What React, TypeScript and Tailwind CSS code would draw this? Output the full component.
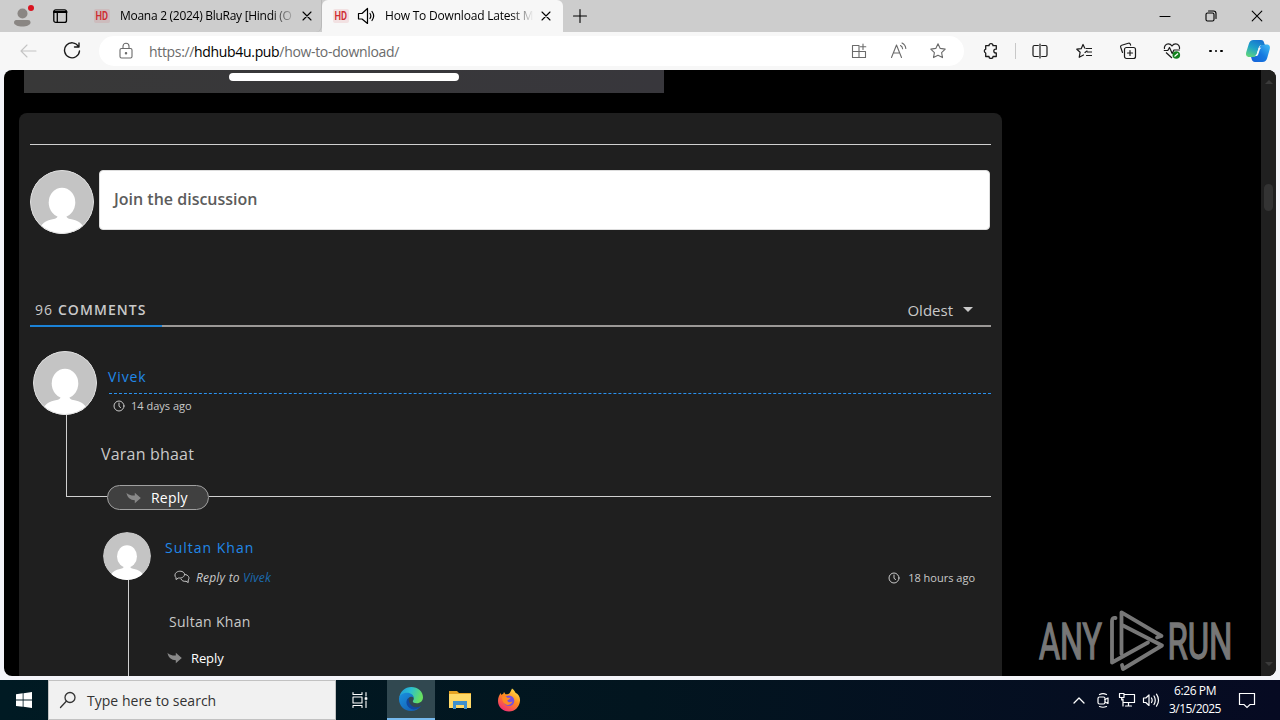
import type { ReactNode } from "react";

type IconProps = {
  className?: string;
  size?: number;
  width?: number;
  children: ReactNode;
};

function Icon({ className = "", size = 16, width = 1.1, children }: IconProps) {
  return (
    <svg
      aria-hidden="true"
      width={size}
      height={size}
      viewBox={`0 0 ${size} ${size}`}
      fill="none"
      stroke="currentColor"
      strokeWidth={width}
      strokeLinecap="round"
      strokeLinejoin="round"
      className={`shrink-0 ${className}`}
    >
      {children}
    </svg>
  );
}

function CloseIcon({ className = "" }: { className?: string }) {
  return (
    <Icon size={10} className={className}>
      <path d="M1 1l8 8M9 1L1 9" />
    </Icon>
  );
}

function Avatar({ size, ring = false }: { size: number; ring?: boolean }) {
  return (
    <svg
      aria-hidden="true"
      width={size}
      height={size}
      viewBox="0 0 64 64"
      className="block shrink-0 overflow-hidden rounded-full"
    >
      <circle cx="32" cy="32" r="32" fill="#c4c4c4" />
      <ellipse cx="32" cy="32.500" rx="13.300" ry="14.700" fill="#fff" />
      <path
        d="M27.500 44c.5 4-1 4.500-5 5.300C17 50.300 13 52.500 10.500 57v7h43v-7c-2.500-4.500-6.500-6.700-12-7.700-4-.8-5.500-1.300-5-5.300z"
        fill="#fff"
      />
      {ring && (
        <circle cx="32" cy="32" r="31.500" fill="none" stroke="#ddd" />
      )}
    </svg>
  );
}

function ClockIcon() {
  return (
    <Icon size={12} width={1}>
      <circle cx="6" cy="6" r="5" />
      <path d="M6 3v3.300l1.600 1.200" />
    </Icon>
  );
}

function ReplyArrow({ className = "" }: { className?: string }) {
  return (
    <svg
      aria-hidden="true"
      width="16"
      height="12"
      viewBox="0 0 16 12"
      fill="currentColor"
      className={`shrink-0 ${className}`}
    >
      <path d="M.5.800C2 2.800 5 3.700 8.800 3.600V.8L14.800 6 8.800 11.300V8.300C4.500 8.300 1.200 5.500.5.800z" />
    </svg>
  );
}

function TitleBar() {
  return (
    <div className="flex h-8 bg-[#cdcdcd] text-[12px] text-black">
      <div className="flex w-20 items-center">
        <svg
          aria-hidden="true"
          width="24"
          height="24"
          viewBox="0 0 24 24"
          className="ml-3"
        >
          <circle cx="10.500" cy="9.500" r="5" fill="#8a8683" />
          <path
            d="M2 18.500c0-2 1.500-2.500 3-2.500h11c1.500 0 2.500.8 2.500 2.500 0 2.500-4 4-8.200 4S2 21 2 18.500z"
            fill="#8a8683"
          />
          <circle cx="19" cy="4" r="3" fill="#d9131f" />
        </svg>
        <Icon className="ml-4" width={1.3}>
          <rect x="1.800" y="1.800" width="12.700" height="12.600" rx="2" />
          <path d="M2 4h12.500" strokeWidth="2" />
          <path d="M5.300 4.500v9.500" />
        </Icon>
      </div>
      <div className="flex w-[242px] items-center rounded-b-md border-r border-[#b9b9b9] pl-[14px]">
        <Favicon />
        <span className="ml-[10px] w-[176px] whitespace-nowrap tracking-[-0.28px] [mask-image:linear-gradient(90deg,#000_86%,transparent)]">
          Moana 2 (2024) BluRay [Hindi (O
        </span>
        <CloseIcon className="ml-[6px]" />
      </div>
      <div className="flex w-[241px] items-center rounded-t-md bg-[#f7f7f7] pl-[11px]">
        <Favicon />
        <Icon size={18} width={1.2} className="ml-[8px]">
          <path d="M1.500 6.500h3.500l5.500-5v15l-5.500-4.500H1.500z" />
          <path d="M13 6.500c1 1.500 1 3.500 0 5M15 4.500c2 2.700 2 6.300 0 9" />
        </Icon>
        <span className="ml-[10px] w-[150px] whitespace-nowrap tracking-[-0.2px] [mask-image:linear-gradient(90deg,#000_84%,transparent_99%)]">
          How To Download Latest Mo
        </span>
        <CloseIcon className="ml-[6px]" />
      </div>
      <Icon className="ml-[9px] self-center" size={16}>
        <path d="M8 1.500v13M1.500 8h13" />
      </Icon>
      <div className="ml-auto flex items-center">
        <Icon size={12} className="mr-[34px]">
          <path d="M1 6.500h10" />
        </Icon>
        <Icon size={12} className="mr-[34px]">
          <rect x="1" y="3" width="8" height="8" rx="1.500" />
          <path d="M3.500 1h5c1.500 0 2.500 1 2.500 2.500v5" />
        </Icon>
        <Icon size={12} className="mr-[17px]">
          <path d="M1.200 1.200l9.600 9.600M10.800 1.200l-9.600 9.600" />
        </Icon>
      </div>
    </div>
  );
}

function Favicon() {
  return (
    <svg
      aria-hidden="true"
      width="16"
      height="16"
      viewBox="0 0 16 16"
      className="shrink-0 overflow-visible"
    >
      <rect y="1" width="16" height="14" rx="2" fill="#cf2b31" opacity=".1" />
      <text
        x="1.500"
        y="12.300"
        textLength="12.500"
        lengthAdjust="spacingAndGlyphs"
        fontFamily="Roboto, sans-serif"
        fontSize="12.500"
        fontWeight="600"
        fill="#cf2b31"
      >
        HD
      </text>
    </svg>
  );
}

function CopilotIcon() {
  return (
    <svg aria-hidden="true" width="26" height="24" viewBox="0 0 26 24">
      <defs>
        <linearGradient id="cop-a" x1=".7" y1="0" x2=".2" y2="1">
          <stop offset="0" stopColor="#1673d0" />
          <stop offset=".5" stopColor="#1fa3c8" />
          <stop offset="1" stopColor="#5fd57c" />
        </linearGradient>
        <linearGradient id="cop-b" x1="1" y1="0" x2="0" y2="1">
          <stop offset="0" stopColor="#41c0f5" />
          <stop offset=".5" stopColor="#1679e0" />
          <stop offset="1" stopColor="#1560d8" />
        </linearGradient>
      </defs>
      <path
        d="M18 5.500h3.500c3 0 4 2 3.200 4.800l-2.500 8.700c-.8 2.800-2.200 4-4.800 4H10c-2 0-3-1.500-3.500-3.500L5.800 17h4c1.700 0 2.600-1 3-2.500l2-6.500c.4-1.500 1.500-2.500 3.200-2.500z"
        fill="url(#cop-b)"
      />
      <path
        d="M8.500 1H16c2 0 2.700 1.300 3.200 3l.6 2h-3c-1.600 0-2.600 1-3 2.400l-2.200 7C11 17 10.200 18 8.300 18H4.500C1.300 18 .5 15.800 1.300 13l2.500-8C4.600 2.300 6 1 8.500 1z"
        fill="url(#cop-a)"
      />
      <path
        d="M13.700 8.800h2.700c-1 .6-1.500 1.500-1.900 2.700l-1.200 3.700c-.4 1-1 1.700-2 1.900H9.500c1.200-.2 1.900-1 2.200-2z"
        fill="#f4f8fb"
      />
    </svg>
  );
}

function Toolbar() {
  return (
    <div className="flex h-[38px] items-center bg-[#f7f7f7] text-[#1b1b1b]">
      <Icon size={18} className="ml-[19px] text-[#c4c4c4]">
        <path d="M17 9H2M8 3L2 9l6 6" />
      </Icon>
      <Icon size={18} width={1.4} className="ml-[26px]">
        <path d="M15.500 4.500A7.500 7.500 0 1 0 16.500 9M16 1v4h-4.500" />
      </Icon>
      <div className="ml-[18px] flex h-[30px] w-[865px] items-center rounded-full bg-white pl-[18px] text-[#6b6b6b]">
        <Icon size={18}>
          <rect x="3" y="6.500" width="12" height="9.500" rx="1.500" />
          <path d="M6 6.500V4.300a3 3 0 0 1 6 0v2.200" />
          <circle cx="9" cy="11.200" r=".7" fill="currentColor" />
        </Icon>
        <span className="ml-[14px] whitespace-nowrap text-[14px] tracking-[-0.33px]">
          https://<span className="text-black">hdhub4u.pub</span>
          /how-to-download/
        </span>
        <Icon className="mr-[23px] ml-auto">
          <path d="M1.500 2.500h6.500v12H1.500zM1.500 8.500h13v6H8M12 1v5.500M9.300 3.800h5.500" />
        </Icon>
        <Icon size={18} className="mr-[22px]">
          <path d="M1.500 15.500L6.500 3l5 12.500M3.300 11h6.500M10.500 3.500c1.400.8 2 1.700 2.100 3.300M12 1c2.500 1.300 3.600 3 3.800 5.500" />
        </Icon>
        <Icon className="mr-[18px]">
          <path d="M8 .8l2.200 4.600 5 .7-3.600 3.500.9 5L8 12.300l-4.500 2.300.9-5L.8 6.100l5-.7z" />
        </Icon>
      </div>
      <Icon className="ml-[19px]" width={1.3}>
        <path d="M6 2.700a2 2 0 0 1 4 0h3.300v3.500h-.6a1.900 1.900 0 0 0 0 3.800h.6v3.500H10a2 2 0 0 1-4 0H2.700V10a2 2 0 0 1 0-3.800V2.700z" />
      </Icon>
      <div className="ml-[16px] h-4 w-px bg-[#c8c8c8]" />
      <Icon className="ml-[16px]" width={1.2}>
        <path d="M6.300 2.500H2.500a1.500 1.500 0 0 0-1.500 1.500v8a1.500 1.500 0 0 0 1.500 1.500h3.800M9.700 2.500h3.800A1.500 1.500 0 0 1 15 4v8a1.500 1.500 0 0 1-1.500 1.500H9.700M8 1v14" />
      </Icon>
      <Icon className="ml-[28px]" width={1.2}>
        <path d="M10 5.500h5.500M11.500 9h4M10.500 12.500h5M8.700 5L7 1.500 5.200 5.700.8 6.200l3.300 3.100-.9 5L7.500 12M9 9.500L11 8" />
      </Icon>
      <Icon className="ml-[27px]" size={18} width={1.2}>
        <rect x="5.500" y="5.500" width="11" height="11" rx="2" />
        <path d="M11 8.500v5M8.500 11h5M3.500 10.500L1.700 5.200c-.3-1 .1-1.700 1-2l6.600-2c1-.3 1.700 0 2 1l.3 1" />
      </Icon>
      <svg
        aria-hidden="true"
        width="18"
        height="18"
        viewBox="0 0 18 18"
        fill="none"
        stroke="currentColor"
        strokeWidth="1.200"
        strokeLinejoin="round"
        className="ml-[26px]"
      >
        <path d="M1.500 7C.8 4 3 1.800 5.300 1.800 7 1.800 8.200 2.700 9 4c.8-1.300 2-2.200 3.700-2.200C15.200 1.800 17 4 16.500 7M3 10.500l6 5.500M.8 8.500h4L6.500 5.500l2.700 6 1.700-3.500h6" />
        <circle cx="13.300" cy="13" r="3.800" fill="#12811d" stroke="none" />
        <path d="M11.500 14.500l3.500-3" stroke="#fff" />
      </svg>
      <div className="ml-[28px] flex gap-[3px]">
        <span className="size-[2.500px] rounded-full bg-black" />
        <span className="size-[2.500px] rounded-full bg-black" />
        <span className="size-[2.500px] rounded-full bg-black" />
      </div>
      <div className="ml-[22px]">
        <CopilotIcon />
      </div>
    </div>
  );
}

function Watermark() {
  return (
    <svg
      aria-hidden="true"
      width="194"
      height="62"
      viewBox="0 0 194 62"
      className="absolute top-[540px] left-[1034px] overflow-visible"
      fill="#777"
      fontFamily="Roboto, sans-serif"
      fontSize="50.500"
    >
      <g stroke="#777" strokeWidth="1.500">
        <text x="1" y="48.700" textLength="63" lengthAdjust="spacingAndGlyphs">
          ANY
        </text>
        <text x="129.500" y="48.700" textLength="65" lengthAdjust="spacingAndGlyphs">
          RUN
        </text>
      </g>
      <g
        fill="none"
        stroke="#777"
        strokeWidth="3.800"
        strokeLinecap="round"
        strokeLinejoin="round"
      >
        <path d="M83.500 44V2.300L123.500 26l-4.500 1.500" />
        <path d="M77.500 8q-3.500-.5-3.500 3v41.500L110 32.500" />
        <path d="M85 15.500l39 20L85 59l-1-4" />
      </g>
    </svg>
  );
}

function Comments() {
  return (
    <section className="mt-5 ml-[15px] h-[563px] w-[983px] overflow-hidden rounded-t-lg bg-[#1f1f1f] px-[11px] text-[#c9c9c9]">
      <div className="mt-[31px] h-px bg-[#d0d0d0]" />
      <div className="mt-[25px] flex gap-[5px]">
        <Avatar size={64} ring />
        <div className="flex h-[60px] w-[891px] items-center rounded border border-[#ddd] bg-white pl-[14px] text-[16px] font-semibold text-[#5c5c5c]">
          <span className="-mt-[2px]">Join the discussion</span>
        </div>
      </div>

      <div className="mt-[65px] flex h-[26px] justify-between">
        <div className="pl-[5px] text-[14px] leading-[22px] tracking-[1.08px]">
          96 <span className="font-semibold">COMMENTS</span>
        </div>
        <div className="flex items-start pr-[18px]">
          <span className="text-[15px] leading-[23px]">Oldest</span>
          <span className="mt-[8px] ml-[10px] border-x-[5px] border-t-[5px] border-x-transparent border-t-[#c9c9c9]" />
        </div>
      </div>
      <div className="flex h-[2px] bg-[#9b9896]">
        <div className="w-[132px] bg-[#1b82d6]" />
      </div>

      <div className="mt-6 ml-[3px] flex h-[134px]">
        <div className="flex w-[68px] flex-col">
          <Avatar size={64} ring />
          <div className="ml-[33px] w-px flex-1 bg-[#d0d0d0]" />
        </div>
        <div className="flex-1">
          <div className="ml-2 h-[43px] border-b border-dashed border-[#2a92f0] pt-[15px] text-[14px] leading-[22px] tracking-[0.9px] text-[#2188e8]">
            <span className="-ml-px">Vivek</span>
          </div>
          <div className="mt-[4px] ml-3 flex items-center gap-[6px] text-[11px] leading-4">
            <ClockIcon />
            14 days ago
          </div>
          <p className="mt-[28px] text-[16px] leading-6 tracking-[0.2px]">
            Varan bhaat
          </p>
        </div>
      </div>
      <div className="ml-9 flex h-[25px]">
        <div className="h-3 w-[41px] border-b border-l border-[#d0d0d0]" />
        <button
          type="button"
          className="flex w-[102px] items-center rounded-full border border-[#a0a0a0] bg-[#404040] pl-[18px] text-[14px] tracking-[0.2px] text-white"
        >
          <ReplyArrow className="mr-[9px] text-[#888]" />
          Reply
        </button>
        <div className="mt-[11px] h-px flex-1 bg-[#d0d0d0]" />
      </div>

      <div className="mt-[22px] ml-[73px] flex h-[144px]">
        <div className="flex w-[62px] flex-col">
          <Avatar size={48} />
          <div className="ml-[25px] w-px flex-1 bg-[#d0d0d0]" />
        </div>
        <div className="flex-1">
          <div className="pt-[5px] text-[14px] leading-[22px] tracking-[1px] text-[#2188e8]">
            Sultan Khan
          </div>
          <div className="mt-[9px] ml-[9px] flex items-center pr-[16px] leading-5">
            <Icon width={1} className="-mt-[2px]">
              <path d="M5 9H4.500L2 10.500V8.700C.3 7 .8 4.500 2.500 3.300 5 1.500 9 2 10.300 4.300c.8 2.200-.8 4.200-3.300 4.600zM11 5.500c3.500.2 5 3.500 3.200 5.500v2.500L12 12.300C9.500 12.500 7.500 11.800 7 10" />
            </Icon>
            <span className="ml-[6px] text-[12px] tracking-[0.2px] italic">
              Reply to <span className="text-[#1b6bb0]">Vivek</span>
            </span>
            <span className="ml-auto flex items-center gap-[8px] text-[11px]">
              <ClockIcon />
              18 hours ago
            </span>
          </div>
          <p className="mt-[23px] ml-1 text-[14px] leading-[22px] tracking-[0.3px]">
            Sultan Khan
          </p>
          <button
            type="button"
            className="mt-[15px] ml-[2px] flex items-center text-[13px] leading-5 tracking-[-0.1px] text-white"
          >
            <ReplyArrow className="mr-[8px] text-[#888]" />
            Reply
          </button>
        </div>
      </div>
    </section>
  );
}

function EdgeIcon() {
  return (
    <svg aria-hidden="true" width="24" height="24" viewBox="0 0 24 24">
      <defs>
        <linearGradient id="edge-top" x1="0" y1="0" x2="1" y2=".3">
          <stop offset="0" stopColor="#2095dc" />
          <stop offset=".5" stopColor="#2bbfd0" />
          <stop offset="1" stopColor="#66df61" />
        </linearGradient>
        <linearGradient id="edge-low" x1="0" y1="0" x2="1" y2="1">
          <stop offset="0" stopColor="#1991df" />
          <stop offset="1" stopColor="#1456ab" />
        </linearGradient>
      </defs>
      <path
        d="M.3 10.500C1.200 4.300 6 0 12.300 0 19 0 24 4.700 24 10.300c0 3.700-2.700 6-6.200 6-2.700 0-4-1-4-2 0-.6 1-1.200 1-2.800 0-2-1.800-4-5-4-4.600 0-8 1.700-9.500 3z"
        fill="url(#edge-top)"
      />
      <path
        d="M0 12c0-4 3.700-6.300 8-6.300 3.800 0 6.700 2.300 6.800 5.300-1-1.300-2-1.500-3-1.300-2 .4-3.800 2.600-3.800 5.300 0 4 3.500 6.300 7.500 6.300 2.500 0 4.500-.9 6.500-2.300C20 22 16.300 24 12 24 5 24 0 18.500 0 12z"
        fill="url(#edge-low)"
      />
      <path
        d="M9.500 10.700C6 13.500 7 20 12.500 22c4 1.300 7.500-1 9.500-3-5.500 3.200-12.500.5-12.500-8.300z"
        fill="#1148a0"
      />
    </svg>
  );
}

function FirefoxIcon() {
  return (
    <svg aria-hidden="true" width="24" height="24" viewBox="0 0 24 24">
      <defs>
        <linearGradient id="fox" x1=".8" y1="0" x2=".2" y2="1">
          <stop offset="0" stopColor="#ffe44a" />
          <stop offset=".45" stopColor="#ff8a1e" />
          <stop offset="1" stopColor="#f1267c" />
        </linearGradient>
      </defs>
      <path
        d="M15 .5c2 1.200 3 3.200 3.500 4.300 3.300 1.700 4.800 4.700 4.500 8C22.500 19 18 23.500 12 23.500S1 19 1 13c0-3 1-5.700 2.800-8l.5 2c.8-.8 1.500-1 2-1.200L7 4l1.500 2.300c2.300.2 3-.3 4-1C13.500 4 14.200 2 15 .5z"
        fill="url(#fox)"
      />
      <circle cx="12" cy="12.700" r="5.300" fill="#7450e0" />
      <path
        d="M5 8.500c2-.8 4.500-.2 5.500 1.200h3c0 1.500-2.500 2-3.200 2.800.2 2 3.400 2.500 5.200.7-.7 3.500-5.500 5-8 2.300C5.500 14 5 11 5 8.500z"
        fill="#ff8b23"
      />
    </svg>
  );
}

function Taskbar() {
  return (
    <footer className="flex h-10 bg-linear-to-r from-[#001a23] via-[#02151f] to-[#060a22] text-white">
      <div className="flex w-12 items-center justify-center">
        <svg
          aria-hidden="true"
          width="16"
          height="16"
          viewBox="0 0 16 16"
          fill="#fff"
        >
          <path d="M0 2.200L6.700 1.300v6.300H0zM7.500 1.200L16 0v7.600H7.500zM0 8.500h6.700v6.300L0 13.900zM7.500 8.500H16V16l-8.500-1.200z" />
        </svg>
      </div>
      <div className="flex w-[288px] items-center border border-[#c2c2c2] bg-[#f1f1f1] pl-[10px] text-[#333]">
        <Icon size={18} width={1.3}>
          <circle cx="11" cy="6.500" r="5" />
          <path d="M7.300 10.300L1.500 16.500" />
        </Icon>
        <span className="ml-[10px] text-[14px] tracking-[0.02px]">
          Type here to search
        </span>
      </div>
      <div className="flex w-[51px] items-center pl-[15px]">
        <Icon size={18}>
          <path d="M2 1.500v2h9v-2M2 16.500v-2h9v2M2 6h9v6H2zM15 1.500v3.500M15 10v6.500" />
          <rect x="14.200" y="6.700" width="1.600" height="1.600" fill="#fff" />
        </Icon>
      </div>
      <div className="flex w-12 items-center justify-center border-b-2 border-[#76b9ed] bg-[#314850]">
        <EdgeIcon />
      </div>
      <div className="flex w-[49px] items-center justify-center">
        <svg aria-hidden="true" width="22" height="20" viewBox="0 0 22 20">
          <path d="M0 1h8l2 2h12v15H0z" fill="#e6a323" />
          <path d="M0 4h22v14H0z" fill="#ffd968" />
          <path d="M4 11h14v8h-3v-4H7v4H4z" fill="#3f91cf" />
          <path d="M7 15h8v3H7z" fill="#ffd968" />
        </svg>
      </div>
      <div className="flex w-[49px] items-center justify-center">
        <FirefoxIcon />
      </div>
      <div className="ml-auto flex items-center">
        <Icon size={12} width={1.3}>
          <path d="M1 9l5-5 5 5" />
        </Icon>
        <Icon size={16} className="ml-[10px]" width={1.2}>
          <rect x="3" y="5" width="7" height="7" rx="1.500" />
          <path d="M10 7.500l3-1.500v5.500l-3-1.500M4.500 2.500q3.500-1.800 7 0M4.500 14.500q3.500 1.500 7 0" />
        </Icon>
        <Icon size={18} className="ml-[7px]" width={1.2}>
          <path d="M6 3.500h10.500v8H5M5 8v7M10.500 11.500v3.500M7.500 15h6M1.500 2.500h4.500v4h-4.500zM3.700 6.500V9H5" />
        </Icon>
        <Icon size={18} className="ml-[6px]" width={1.2}>
          <path d="M1.500 7h2.300L7 4v10.500l-3.200-3H1.500zM9.500 7q1.300 2.300 0 4.500M12 5q2.500 4.300 0 8.500M14.500 3.200q4 6 0 12" />
        </Icon>
        <div className="ml-[6px] w-[58px] text-center text-[12px] leading-[18px] tracking-[-0.55px] whitespace-nowrap">
          <div className="tracking-[-0.4px]">6:26 PM</div>
          <div>3/15/2025</div>
        </div>
        <Icon size={18} className="mr-[24px] ml-[14px]" width={1.2}>
          <path d="M1.500 2.500h15v11H12l-3 3-3-3H1.500z" strokeLinejoin="miter" />
        </Icon>
      </div>
    </footer>
  );
}

export default function App() {
  return (
    <div className="h-[720px] w-[1280px] overflow-hidden bg-[#f3f4f9] font-['Open_Sans','Noto_Sans',sans-serif]">
      <TitleBar />
      <Toolbar />
      <main className="relative mx-1 mb-1 flex h-[606px] overflow-hidden rounded-lg bg-black">
        <div className="flex-1">
          <div className="ml-5 h-[23px] w-[640px] bg-linear-to-r from-[#383838] to-[#38373c] pt-[3px]">
            <div className="ml-[205px] h-2 w-[230px] rounded-full bg-white" />
          </div>
          <Comments />
        </div>
        <div className="flex w-[15px] flex-col items-center justify-between bg-[#202020] py-[10px]">
          <div className="border-x-4 border-b-4 border-x-transparent border-b-[#3a3a3a]" />
          <div className="mt-[100px] mb-auto h-[27px] w-[9px] rounded-full bg-[#333]" />
          <div className="border-x-4 border-t-4 border-x-transparent border-t-[#3a3a3a]" />
        </div>
        <Watermark />
      </main>
      <Taskbar />
    </div>
  );
}
